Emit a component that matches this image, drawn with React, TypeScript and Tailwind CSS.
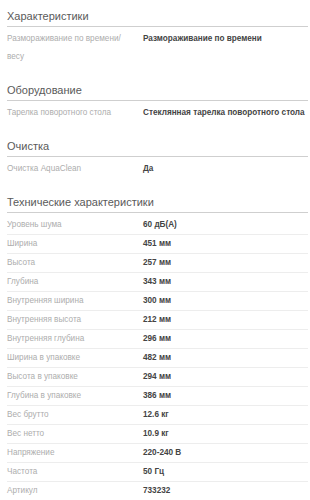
const sections: { title: string; rows: [string, string][] }[] = [
  {
    title: 'Характеристики',
    rows: [['Размораживание по времени/ весу', 'Размораживание по времени']],
  },
  {
    title: 'Оборудование',
    rows: [['Тарелка поворотного стола', 'Стеклянная тарелка поворотного стола']],
  },
  {
    title: 'Очистка',
    rows: [['Очистка AquaClean', 'Да']],
  },
  {
    title: 'Технические характеристики',
    rows: [
      ['Уровень шума', '60 дБ(A)'],
      ['Ширина', '451 мм'],
      ['Высота', '257 мм'],
      ['Глубина', '343 мм'],
      ['Внутренняя ширина', '300 мм'],
      ['Внутренняя высота', '212 мм'],
      ['Внутренняя глубина', '296 мм'],
      ['Ширина в упаковке', '482 мм'],
      ['Высота в упаковке', '294 мм'],
      ['Глубина в упаковке', '386 мм'],
      ['Вес брутто', '12.6 кг'],
      ['Вес нетто', '10.9 кг'],
      ['Напряжение', '220-240 В'],
      ['Частота', '50 Гц'],
      ['Артикул', '733232'],
    ],
  },
];

export default function App() {
  return (
    <div className="w-[310px] h-[500px] overflow-hidden bg-white pl-[7px] pr-[2px] font-['Liberation_Sans',Arial,sans-serif]">
      {sections.map((s) => (
        <section key={s.title}>
          {/* заголовок группы */}
          <h3 className="pt-[10px] pb-[3px] text-[11px] leading-[13px] font-normal text-[#5a5a5a] border-b border-[#cfcfcf]">
            {s.title}
          </h3>
          <div className="pt-[3px] pb-[8px]">
            {s.rows.map(([label, value]) => (
              <div key={label} className="flex border-b border-[#ededed] last:border-b-0 text-[8.2px] leading-[18px]">
                <div className="w-[136px] shrink-0 pr-[10px] text-[#adadad]">{label}</div>
                <div className="flex-1 font-bold text-[#444]">{value}</div>
              </div>
            ))}
          </div>
        </section>
      ))}
    </div>
  );
}
